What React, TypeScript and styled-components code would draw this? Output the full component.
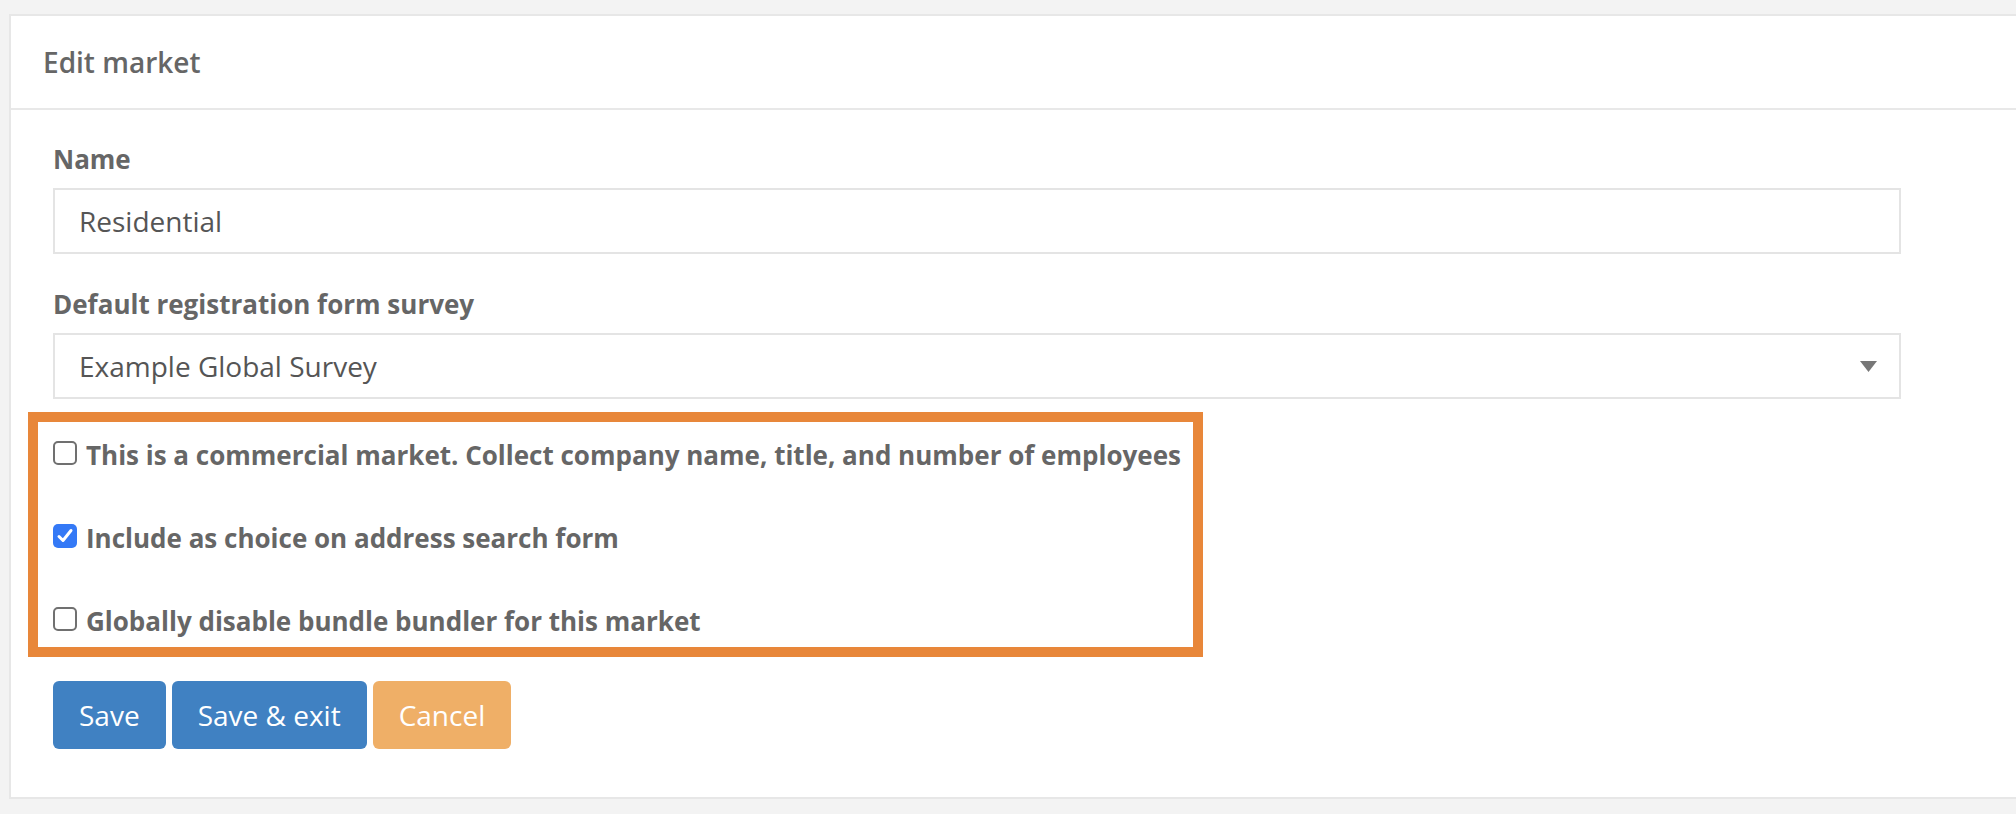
import styled, { createGlobalStyle } from 'styled-components';

const GlobalStyle = createGlobalStyle`
    html, body {
        margin: 0;
        padding: 0;
        overflow: hidden;
        background: #f3f3f3;
        font-family: 'Open Sans', 'Liberation Sans', sans-serif;
    }
    * {
        box-sizing: border-box;
    }
`;

const Page = styled.div`
    height: 814px;
    padding-top: 14px;
    padding-left: 9px;
`;

const Panel = styled.div`
    width: 2040px;
    background: #fff;
    border: 2px solid #e7e7e7;
`;

const PanelHeader = styled.div`
    height: 94px;
    display: flex;
    align-items: center;
    padding: 0 32px;
    border-bottom: 2px solid #e8e8e8;
`;

const PanelTitle = styled.h3`
    margin: 0;
    font-size: 28px;
    font-weight: 600;
    line-height: 38px;
    color: #666;
`;

const PanelBody = styled.div`
    padding: 32px 42px 48px;
`;

const FormGroup = styled.div`
    width: 1848px;
    margin-bottom: 33px;
`;

const Label = styled.label`
    display: block;
    font-size: 26px;
    line-height: 35px;
    font-weight: 700;
    color: #666;
    margin-bottom: 11px;
`;

const fieldBox = `
    height: 66px;
    width: 100%;
    border: 2px solid #e4e4e4;
    background: #fff;
    font-family: 'Open Sans', 'Liberation Sans', sans-serif;
    font-size: 28px;
    color: #555;
    padding: 0 24px;
`;

const TextInput = styled.input`
    ${fieldBox}
    display: block;
    outline: none;
`;

const SelectBox = styled.div`
    ${fieldBox}
    display: flex;
    align-items: center;
    justify-content: space-between;
    padding-right: 22px;
`;

const Highlight = styled.div`
    width: 1175px;
    margin: -20px 0 0 -25px;
    border: 10px solid #e8873a;
    padding: 16px 15px 8px;
    display: flex;
    flex-direction: column;
    gap: 48px;
`;

const CheckRow = styled.label`
    display: block;
    font-size: 26px;
    line-height: 35px;
    font-weight: 700;
    color: #666;
    white-space: nowrap;
`;

const Box = styled.span<{ checked?: boolean }>`
    display: inline-block;
    vertical-align: baseline;
    width: 24px;
    height: 24px;
    margin-right: 9px;
    border-radius: 5px;
    border: ${({ checked }) => (checked ? 'none' : '2px solid #707070')};
    background: ${({ checked }) => (checked ? '#3479f6' : '#fff')};
    position: relative;

    svg {
        position: absolute;
        left: 3px;
        top: 3px;
    }
`;

const Actions = styled.div`
    display: flex;
    gap: 6px;
    margin-top: 24px;
`;

const Button = styled.button<{ variant?: 'primary' | 'warning' }>`
    height: 68px;
    padding: 0 26px;
    border: none;
    border-radius: 6px;
    font-family: 'Open Sans', 'Liberation Sans', sans-serif;
    font-size: 28px;
    color: #fff;
    background: ${({ variant }) => (variant === 'warning' ? '#efaf67' : '#4081c2')};
    cursor: pointer;
`;

const Checkbox = ({ checked, label }: { checked?: boolean; label: string }) => (
    <CheckRow>
        <Box checked={checked}>
            {checked && (
                <svg width="18" height="18" viewBox="0 0 18 18">
                    <path d="M3 9.5 L7 13.5 L15 3.5" fill="none" stroke="#fff" strokeWidth="3" strokeLinecap="round" strokeLinejoin="round" />
                </svg>
            )}
        </Box>
        {label}
    </CheckRow>
);

const App = () => (
    <>
        <GlobalStyle />
        <Page>
            <Panel>
                <PanelHeader>
                    <PanelTitle>Edit market</PanelTitle>
                </PanelHeader>
                <PanelBody>
                    <FormGroup>
                        <Label>Name</Label>
                        <TextInput defaultValue="Residential" />
                    </FormGroup>
                    <FormGroup>
                        <Label>Default registration form survey</Label>
                        <SelectBox>
                            <span>Example Global Survey</span>
                            <svg width="17" height="11" viewBox="0 0 17 11">
                                <path d="M0 0 H17 L8.5 11 Z" fill="#777" />
                            </svg>
                        </SelectBox>
                    </FormGroup>
                    <Highlight>
                        <Checkbox label="This is a commercial market. Collect company name, title, and number of employees" />
                        <Checkbox checked label="Include as choice on address search form" />
                        <Checkbox label="Globally disable bundle bundler for this market" />
                    </Highlight>
                    <Actions>
                        <Button variant="primary">Save</Button>
                        <Button variant="primary">Save &amp; exit</Button>
                        <Button variant="warning">Cancel</Button>
                    </Actions>
                </PanelBody>
            </Panel>
        </Page>
    </>
);

export default App;
